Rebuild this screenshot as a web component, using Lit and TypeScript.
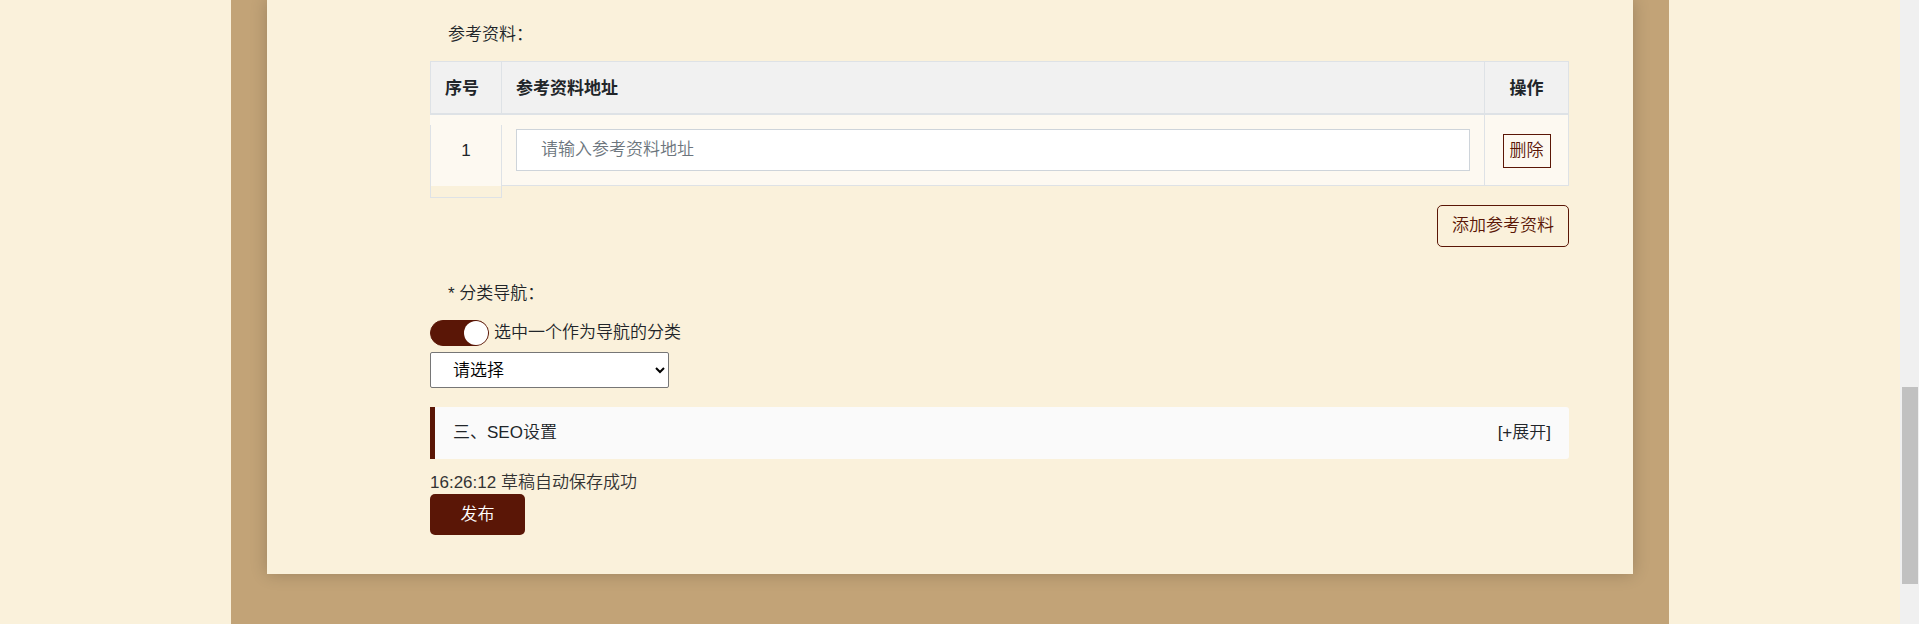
import { LitElement, html, css } from "lit";
import { customElement, property, state } from "lit/decorators.js";
import { styleMap } from "lit/directives/style-map.js";

@customElement("reference-table")
class ReferenceTable extends LitElement {
  @state() private rows: string[] = [""];

  static styles = css`
    :host { display: block; }
    .table {
      width: 100%;
      border-spacing: 0;
    }
    .head {
      box-sizing: border-box;
      height: 54px;
      padding: 2px 14px 0;
      background: #f1f1f1;
      border: solid #dee2e6;
      border-width: 1px 1px 2px 0;
      text-align: left;
      font-weight: 700;
      color: #212529;
    }
    .head.num { width: 72px; border-left-width: 1px; }
    .head.op { width: 84px; text-align: center; }
    .row { background: rgba(255, 255, 255, 0.6); }
    .cell {
      padding: 14px;
      border: solid #dee2e6;
      border-width: 0 1px 1px 0;
      text-align: center;
    }
    .cell.num { padding: 10px 0 0; border: 0; vertical-align: top; }
    .cell.op { padding: 2px 0 0; }
    .index {
      box-sizing: border-box;
      height: 73px;
      margin-bottom: -12px;
      padding-top: 13px;
      border: 1px solid #dee2e6;
      border-top: 0;
    }
    .address {
      display: block;
      box-sizing: border-box;
      width: 100%;
      height: 42px;
      padding: 0 24px;
      border: 1px solid #ced4da;
      border-radius: 0;
      background: #fff;
      font: inherit;
      color: #495057;
    }
    .address::placeholder { color: #6c757d; opacity: 1; }
    .remove {
      height: 34px;
      padding: 0 6px;
      border: 1px solid #5a1606;
      background: transparent;
      color: #5a1606;
      font: inherit;
      line-height: 30px;
    }
    .actions { display: flex; justify-content: flex-end; margin-top: 19px; }
    .add {
      height: 42px;
      padding: 0 14px;
      border: 1px solid #5a1606;
      border-radius: 5px;
      background: transparent;
      color: #5a1606;
      font: inherit;
    }
  `;

  private add() { this.rows = [...this.rows, ""]; }
  private remove(i: number) { this.rows = this.rows.filter((_, n) => n !== i); }

  render() {
    return html`
      <table class="table">
        <thead>
          <tr>
            <th class="head num" scope="col">序号</th>
            <th class="head" scope="col">参考资料地址</th>
            <th class="head op" scope="col">操作</th>
          </tr>
        </thead>
        <tbody>
          ${this.rows.map((value, i) => html`
            <tr class="row">
              <td class="cell num"><div class="index">${i + 1}</div></td>
              <td class="cell">
                <input class="address" type="text" aria-label="参考资料地址" placeholder="请输入参考资料地址" .value=${value} />
              </td>
              <td class="cell op"><button class="remove" type="button" @click=${() => this.remove(i)}>删除</button></td>
            </tr>`)}
        </tbody>
      </table>
      <div class="actions"><button class="add" type="button" @click=${this.add}>添加参考资料</button></div>
    `;
  }
}

@customElement("page-scrollbar")
class PageScrollbar extends LitElement {
  @property({ type: Number }) start = 0;
  @property({ type: Number }) size = 1;

  static styles = css`
    :host {
      display: flex;
      flex-direction: column;
      flex: none;
      box-sizing: border-box;
      width: 19px;
      padding: 0 1px 0 2px;
      background: #f0f0f0;
    }
    .thumb { background: #c1c1c1; }
  `;

  render() {
    return html`
      <div style=${styleMap({ flexGrow: String(this.start) })}></div>
      <div class="thumb" style=${styleMap({ flexGrow: String(this.size) })}></div>
      <div style=${styleMap({ flexGrow: String(1 - this.start - this.size) })}></div>
    `;
  }
}

@customElement("app-root")
class AppRoot extends LitElement {
  static styles = css`
    :host {
      display: flex;
      min-height: 100vh;
      background: #faf1db;
      color: #212529;
      font: 350 17px/26px "Liberation Sans", "Noto Sans CJK SC", sans-serif;
    }
    .page { flex: 1; display: flex; justify-content: center; min-width: 0; }
    .band {
      box-sizing: border-box;
      flex: 0 1 1438px;
      min-width: 0;
      padding: 0 36px 50px;
      background: #c2a377;
    }
    .card {
      padding: 22px 64px 39px 163px;
      background: #faf1db;
      box-shadow: 0 0 16px rgba(0, 0, 0, 0.2);
    }
    .title { margin-bottom: 13px; padding-left: 18px; }
    .title.next { margin-top: 34px; }
    .toggle { display: flex; align-items: center; gap: 5px; margin-bottom: 6px; }
    .switch {
      appearance: none;
      box-sizing: border-box;
      display: flex;
      width: 59px;
      height: 26px;
      margin: 0;
      padding: 0;
      border: 1px solid #5a1606;
      border-radius: 13px;
      background: #fff;
    }
    .switch:checked { justify-content: flex-end; background: #5a1606; }
    .switch::before {
      content: "";
      width: 24px;
      height: 24px;
      border-radius: 50%;
      background: #fff;
    }
    .switch:not(:checked)::before { background: #5a1606; }
    .category {
      display: block;
      box-sizing: border-box;
      width: 239px;
      height: 36px;
      padding: 0 4px 0 18px;
      border: 1px solid #767676;
      border-radius: 2px;
      background-color: #fff;
      color: #000;
      font: inherit;
    }
    .section {
      display: flex;
      justify-content: space-between;
      margin-top: 19px;
      padding: 13px 18px;
      border-left: 5px solid #5a1606;
      border-radius: 0 3px 3px 0;
      background: #fafafa;
    }
    .expand { color: inherit; text-decoration: none; }
    .saved { margin-top: 13px; line-height: 22px; color: #333; }
    .publish {
      display: block;
      width: 95px;
      height: 41px;
      padding: 0;
      border: 0;
      border-radius: 5px;
      background: #5a1606;
      color: #fff;
      font: inherit;
    }
  `;

  render() {
    return html`
      <main class="page">
        <div class="band">
          <form class="card" @submit=${(e: Event) => e.preventDefault()}>
            <div class="title">参考资料：</div>
            <reference-table></reference-table>
            <div class="title next"><label for="category">* 分类导航：</label></div>
            <div class="toggle">
              <input class="switch" id="nav" type="checkbox" role="switch" checked />
              <label for="nav">选中一个作为导航的分类</label>
            </div>
            <select class="category" id="category"><option>请选择</option></select>
            <div class="section">
              <span>三、SEO设置</span>
              <a class="expand" href="#seo">[+展开]</a>
            </div>
            <div class="saved">16:26:12 草稿自动保存成功</div>
            <button class="publish" type="submit">发布</button>
          </form>
        </div>
      </main>
      <page-scrollbar start="0.62" size="0.316" aria-hidden="true"></page-scrollbar>
    `;
  }
}
